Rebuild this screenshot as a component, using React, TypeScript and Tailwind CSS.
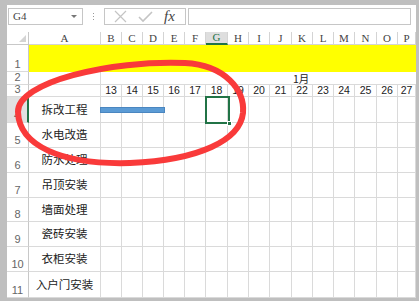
import React from 'react';

const cols = [
  { l: 'B', w: 21, n: 13 },
  { l: 'C', w: 21, n: 14 },
  { l: 'D', w: 21, n: 15 },
  { l: 'E', w: 21, n: 16 },
  { l: 'F', w: 21, n: 17 },
  { l: 'G', w: 22, n: 18 },
  { l: 'H', w: 21, n: 19 },
  { l: 'I', w: 21, n: 20 },
  { l: 'J', w: 22, n: 21 },
  { l: 'K', w: 21, n: 22 },
  { l: 'L', w: 21, n: 23 },
  { l: 'M', w: 21, n: 24 },
  { l: 'N', w: 22, n: 25 },
  { l: 'O', w: 21, n: 26 },
  { l: 'P', w: 18, n: 27 },
];

const tasks = [
  { n: 4, h: 26, t: '拆改工程' },
  { n: 5, h: 25, t: '水电改造' },
  { n: 6, h: 25, t: '防水处理' },
  { n: 7, h: 25, t: '吊顶安装' },
  { n: 8, h: 24, t: '墙面处理' },
  { n: 9, h: 25, t: '瓷砖安装' },
  { n: 10, h: 25, t: '衣柜安装' },
  { n: 11, h: 26, t: '入户门安装' },
];

const serif = { fontFamily: '"Liberation Serif", serif' };
const cjk = { fontFamily: '"Noto Sans CJK SC", sans-serif' };

const RowHead: React.FC<{ n: number; h: number; active?: boolean }> = ({ n, h, active }) => (
  <div
    className={`w-[22px] shrink-0 flex items-end justify-center pb-[1px] text-[11px] leading-[11px] text-[#666] border-b border-[#dadada] ${
      active ? 'bg-[#e1e1e1] border-r-2 border-r-[#217346]' : 'border-r border-r-[#c8c8c8]'
    }`}
    style={{ height: h, fontFamily: '"Liberation Sans", sans-serif' }}
  >
    {n}
  </div>
);

export default function App() {
  return (
    <div className="relative w-[419px] h-[301px] overflow-hidden bg-[#bfbfbf] pt-[5px] pl-[7px] pr-[3px] pb-[3px]">
      <div className="flex flex-col h-full bg-white">
        {/* formula bar */}
        <div className="h-[27px] flex items-start pt-[3px] shrink-0">
          <div className="ml-[1px] w-[75px] h-[17px] border border-[#c6c6c6] flex items-center justify-between pl-[4px] pr-[5px] text-[11px] text-[#444]" style={serif}>
            <span>G4</span>
            <svg width="6" height="4" viewBox="0 0 6 4"><path d="M0 0 L6 0 L3 3 Z" fill="#777" /></svg>
          </div>
          <div className="ml-[10px] mt-[5px] flex flex-col gap-[2px]">
            <div className="w-[1px] h-[1px] bg-[#999]" />
            <div className="w-[1px] h-[1px] bg-[#999]" />
            <div className="w-[1px] h-[1px] bg-[#999]" />
          </div>
          <div className="ml-[10px] w-[82px] h-[17px] border border-[#c6c6c6] flex items-center">
            <svg className="ml-[9px]" width="13" height="13" viewBox="0 0 13 13">
              <path d="M1 1 L12 12 M12 1 L1 12" stroke="#c4c4c4" strokeWidth="1.2" />
            </svg>
            <svg className="ml-[11px]" width="15" height="12" viewBox="0 0 15 12">
              <path d="M1 6 L5 10 L14 1" stroke="#c4c4c4" strokeWidth="1.6" fill="none" />
            </svg>
            <span className="ml-[11px] text-[15px] leading-[15px] italic text-[#444]" style={serif}>
              fx
            </span>
          </div>
          <div className="ml-[2px] flex-1 mr-[5px] h-[17px] border border-[#c6c6c6]" />
        </div>

        {/* column headers */}
        <div className="h-[13px] flex shrink-0 text-[11px] leading-[10px] text-[#444]" style={serif}>
          <div className="w-[22px] shrink-0 border-r border-b border-[#c8c8c8] flex items-end justify-end pr-[2px] pb-[2px]">
            <svg width="7" height="7" viewBox="0 0 7 7"><path d="M7 0 L7 7 L0 7 Z" fill="#d4d4d4" /></svg>
          </div>
          <div className="w-[72px] shrink-0 border-r border-b border-[#d4d4d4] flex items-end justify-center pb-[1px]">A</div>
          {cols.map((c) => (
            <div
              key={c.l}
              className={`shrink-0 flex items-end justify-center pb-[1px] border-r border-[#d4d4d4] ${
                c.l === 'G' ? 'bg-[#dedede] text-[#217346] border-b-2 border-b-[#217346]' : 'border-b'
              }`}
              style={{ width: c.w }}
            >
              {c.l}
            </div>
          ))}
        </div>

        {/* row 1 */}
        <div className="flex h-[27px] shrink-0">
          <RowHead n={1} h={27} />
          <div className="flex-1 bg-[#ffff00]" />
        </div>

        {/* row 2 */}
        <div className="flex h-[13px] shrink-0">
          <RowHead n={2} h={13} />
          <div className="w-[72px] shrink-0 border-r border-b border-[#dadada]" />
          <div className="flex-1 border-b border-[#dadada] pl-[192px] flex items-center text-[10.5px] leading-[11px] text-[#222]" style={cjk}>
            1月
          </div>
        </div>

        {/* row 3 */}
        <div className="flex h-[12px] shrink-0">
          <RowHead n={3} h={12} />
          <div className="w-[72px] shrink-0 border-r border-b border-[#dadada]" />
          {cols.map((c) => (
            <div
              key={c.l}
              className="shrink-0 border-r border-b border-[#dadada] flex items-center justify-center text-[10.5px] leading-[11px] text-[#222]"
              style={{ width: c.w, fontFamily: '"Liberation Sans", sans-serif' }}
            >
              {c.n}
            </div>
          ))}
        </div>

        {/* task rows */}
        {tasks.map((r) => (
          <div key={r.n} className="flex shrink-0" style={{ height: r.h }}>
            <RowHead n={r.n} h={r.h} active={r.n === 4} />
            <div className="w-[72px] shrink-0 border-r border-b border-[#dadada] flex items-center justify-center text-[11.5px] text-[#222]" style={cjk}>
              {r.t}
            </div>
            {cols.map((c) => (
              <div key={c.l} className="shrink-0 border-r border-b border-[#dadada]" style={{ width: c.w }} />
            ))}
          </div>
        ))}
      </div>

      {/* bar in row 4 */}
      <div className="absolute left-[100px] top-[107px] w-[65px] h-[6px] bg-[#5b9bd5] border border-[#4a86c0]" />

      {/* selected cell G4 */}
      <div className="absolute left-[205px] top-[96px] w-[25px] h-[28px] border-2 border-[#217346]" />
      <div className="absolute left-[227px] top-[121px] w-[5px] h-[5px] bg-[#217346] border border-white" />

      {/* red ellipse */}
      <svg className="absolute left-0 top-0 pointer-events-none" width="419" height="301" viewBox="0 0 419 301">
        <path
          d="M 18 112 C 17 82, 110 60, 185 63 C 225 65, 245 90, 243 113 C 240 140, 200 160, 130 163 C 60 165, 19 145, 18 112 Z"
          fill="none"
          stroke="#f93a3a"
          strokeWidth="6"
        />
      </svg>
    </div>
  );
}
